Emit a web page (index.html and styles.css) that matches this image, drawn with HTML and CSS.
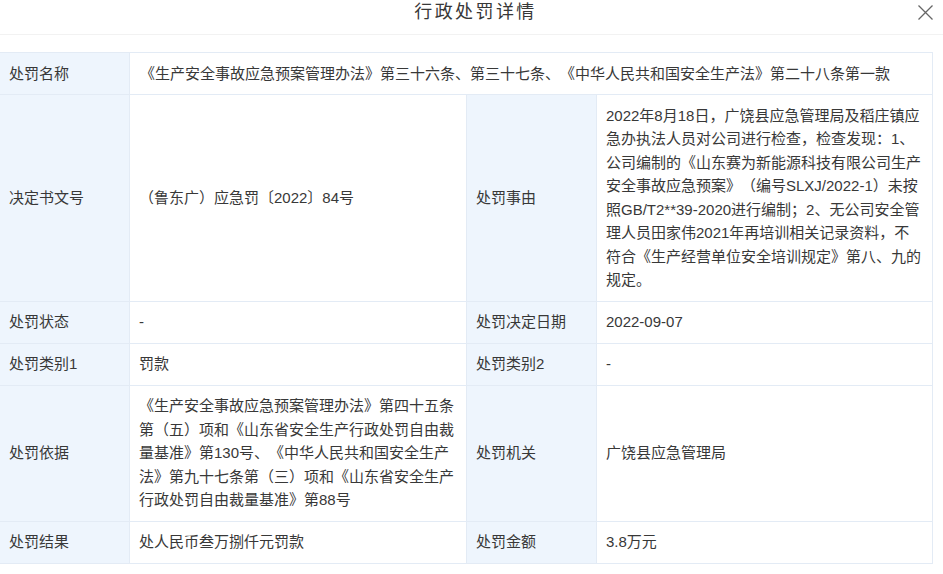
FILE: index.html
```html
<!DOCTYPE html>
<html lang="zh-CN">
<head>
<meta charset="utf-8">
<title>行政处罚详情</title>
<link rel="stylesheet" href="styles.css">
</head>
<body>
<div class="modal">
  <header class="modal-header">
    <h1 class="modal-title">行政处罚详情</h1>
    <button class="close-btn" aria-label="关闭">
      <svg width="15" height="15" viewBox="0 0 15 15"><path d="M0.5 0.5 L14.5 14.5 M14.5 0.5 L0.5 14.5" stroke="#666" stroke-width="1.3" fill="none"/></svg>
    </button>
  </header>
  <div class="detail-grid">
    <div class="label">处罚名称</div>
    <div class="value span3">《生产安全事故应急预案管理办法》第三十六条、第三十七条、《中华人民共和国安全生产法》第二十八条第一款</div>

    <div class="label">决定书文号</div>
    <div class="value">（鲁东广）应急罚〔2022〕84号</div>
    <div class="label">处罚事由</div>
    <div class="value">2022年8月18日，广饶县应急管理局及稻庄镇应急办执法人员对公司进行检查，检查发现：1、公司编制的《山东赛为新能源科技有限公司生产安全事故应急预案》（编号SLXJ/2022-1）未按照GB/T2**39-2020进行编制；2、无公司安全管理人员田家伟2021年再培训相关记录资料，不符合《生产经营单位安全培训规定》第八、九的规定。</div>

    <div class="label">处罚状态</div>
    <div class="value">-</div>
    <div class="label">处罚决定日期</div>
    <div class="value">2022-09-07</div>

    <div class="label">处罚类别1</div>
    <div class="value">罚款</div>
    <div class="label">处罚类别2</div>
    <div class="value">-</div>

    <div class="label">处罚依据</div>
    <div class="value">《生产安全事故应急预案管理办法》第四十五条第（五）项和《山东省安全生产行政处罚自由裁量基准》第130号、《中华人民共和国安全生产法》第九十七条第（三）项和《山东省安全生产行政处罚自由裁量基准》第88号</div>
    <div class="label">处罚机关</div>
    <div class="value">广饶县应急管理局</div>

    <div class="label">处罚结果</div>
    <div class="value">处人民币叁万捌仟元罚款</div>
    <div class="label">处罚金额</div>
    <div class="value">3.8万元</div>
  </div>
</div>
</body>
</html>
```

FILE: styles.css
```css
html, body {
  margin: 0;
  padding: 0;
  background: #ffffff;
}

body {
  font-family: "Liberation Sans", "Noto Sans CJK SC", sans-serif;
  font-size: 15px;
  color: #383838;
  text-spacing-trim: space-all;
}

.modal {
  width: 943px;
}

.modal-header {
  position: relative;
  height: 35px;
  box-sizing: border-box;
  border-bottom: 1px solid #f2f2f2;
  display: flex;
  justify-content: center;
}

.modal-title {
  margin: 0;
  font-size: 18px;
  font-weight: normal;
  line-height: 25px;
  letter-spacing: 2.4px;
  color: #383838;
  padding-left: 8px;
}

.close-btn {
  position: absolute;
  left: 918px;
  top: 5px;
  width: 15px;
  height: 15px;
  padding: 0;
  border: 0;
  background: transparent;
  display: block;
}

.close-btn svg {
  display: block;
}

.detail-grid {
  margin: 17px 0 0 -1px;
  width: 934px;
  box-sizing: border-box;
  display: grid;
  grid-template-columns: 129px 336px 129px 335px;
  gap: 1px;
  border: 1px solid #e3ebf5;
  background: #e3ebf5;
}

.label,
.value {
  display: flex;
  align-items: center;
  line-height: 23.5px;
  padding: 8.75px 9px;
}

.label {
  background: #eef5fd;
  padding-left: 9px;
}

.value {
  background: #ffffff;
  padding-left: 10px;
  padding-right: 9px;
}

.label + .value + .label + .value {
  padding-left: 9px;
}

.span3 {
  grid-column: span 3;
}
```
